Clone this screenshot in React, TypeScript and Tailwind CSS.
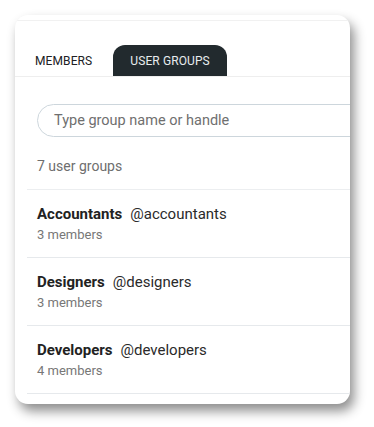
import React from "react";

const groups = [
  { name: "Accountants", handle: "@accountants", members: 3 },
  { name: "Designers", handle: "@designers", members: 3 },
  { name: "Developers", handle: "@developers", members: 4 },
];

export default function App() {
  return (
    <div
      className="w-[374px] h-[427px] bg-white pl-[15px] pt-[15px]"
      style={{ fontFamily: "Roboto, 'Noto Sans', sans-serif" }}
    >
      <div className="w-[335px] h-[389px] bg-white rounded-[13px] overflow-hidden shadow-[4px_7px_12px_rgba(0,0,0,0.45)]">
        {/* Top strip */}
        <div className="h-[5px]" />
        <div className="h-px bg-[#f1f1f1]" />

        {/* Tabs */}
        <div className="h-[56px] flex items-end border-b border-[#eeeeee] pl-[3px]">
          <button className="h-[31px] px-[17px] text-[12px] text-[#202124] tracking-[0.1px] leading-none">
            MEMBERS
          </button>
          <button className="ml-[4px] h-[31px] px-[17px] rounded-t-[12px] bg-[#222a2e] text-[12px] text-[#e8ecee] tracking-[0.1px] leading-none">
            USER GROUPS
          </button>
        </div>

        {/* Search */}
        <div className="pt-[27px] pl-[22px]">
          <div className="w-[340px] h-[33px] rounded-full border-[1.5px] border-[#cdd6dc] flex items-center pl-[16px]">
            <span className="text-[14.5px] text-[#6f6f6f]">Type group name or handle</span>
          </div>
        </div>

        {/* Count */}
        <div className="pl-[22px] pt-[19px] h-[52px] text-[14px] text-[#6e6e6e] leading-[20px]">
          7 user groups
        </div>

        {/* List */}
        <div className="ml-[12px] border-t border-[#eceef0]">
          {groups.map((g) => (
            <div key={g.name} className="h-[68px] border-b border-[#e6e9ec] pl-[10px] pt-[14px]">
              <div className="flex items-baseline gap-[8px] leading-[20px]">
                <span className="text-[15px] font-bold text-[#222222]">{g.name}</span>
                <span className="text-[15px] text-[#2a2a2a]">{g.handle}</span>
              </div>
              <div className="text-[13px] text-[#777777] leading-[18px] mt-[2px]">
                {g.members} members
              </div>
            </div>
          ))}
        </div>
      </div>
    </div>
  );
}
